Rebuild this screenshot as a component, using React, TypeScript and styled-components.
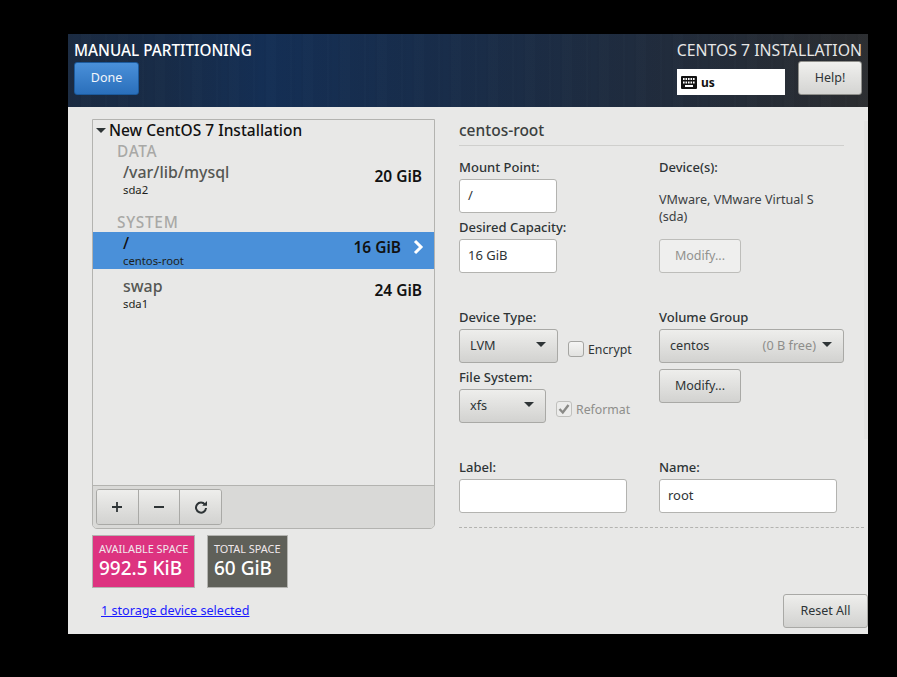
import React from "react";
import styled, { createGlobalStyle } from "styled-components";

const Global = createGlobalStyle`
  html, body { margin: 0; padding: 0; background: #000; height: 100%; }
  body { font-family: "Noto Sans", "Open Sans", sans-serif; font-size: 13px; color: #2e3436; }
`;

const Screen = styled.div`
  width: 897px;
  height: 677px;
  padding: 34px 0 0 68px;
  box-sizing: border-box;
  background: #000;
`;

const Window = styled.div`
  width: 800px;
  height: 600px;
  display: flex;
  flex-direction: column;
  background: #e8e8e7;
`;

const Header = styled.header`
  height: 73px;
  flex: none;
  box-sizing: border-box;
  padding: 7px 6px 0;
  display: flex;
  justify-content: space-between;
  background:
    repeating-linear-gradient(90deg, rgba(255,255,255,0.008) 0 2px, rgba(0,0,0,0.012) 2px 5px, rgba(255,255,255,0) 5px 11px, rgba(0,0,0,0.02) 11px 13px, rgba(255,255,255,0.008) 13px 23px, rgba(0,0,0,0.01) 23px 37px),
    linear-gradient(90deg, #1b2b42 0%, #182c48 12%, #142f55 25%, #182d4b 45%, #1f2c3f 70%, #2b2d30 100%);
`;

const HeaderGroup = styled.div<{ $end?: boolean }>`
  display: flex;
  flex-direction: column;
  align-items: ${(p) => (p.$end ? "flex-end" : "flex-start")};
`;

const Title = styled.div<{ $light?: boolean }>`
  height: 20px;
  line-height: 19px;
  font-size: ${(p) => (p.$light ? 15.8 : 15.3)}px;
  font-weight: ${(p) => (p.$light ? 400 : 500)};
  color: ${(p) => (p.$light ? "#e6e6e6" : "#ffffff")};
  white-space: nowrap;
`;

const DoneButton = styled.div`
  margin-top: 1px;
  width: 65px;
  height: 33px;
  box-sizing: border-box;
  border: 1px solid #1c5a9c;
  border-radius: 3px;
  background: linear-gradient(#4a90d9, #2a6fbb);
  color: #f2f6fb;
  font-size: 12.5px;
  padding-bottom: 3px;
  display: flex;
  align-items: center;
  justify-content: center;
`;

const HeaderTools = styled.div`
  display: flex;
  align-items: flex-end;
  gap: 13px;
`;

const KeyboardBox = styled.div`
  width: 108px;
  height: 26px;
  box-sizing: border-box;
  background: #fff;
  padding-left: 4px;
  display: flex;
  align-items: center;
  gap: 4px;
  color: #111;
  font-size: 12px;
  font-weight: 700;
`;

const HelpButton = styled.div`
  width: 64px;
  height: 34px;
  box-sizing: border-box;
  border: 1px solid #8f8f8b;
  border-radius: 3px;
  background: linear-gradient(#f0f0ee, #d4d4d2);
  color: #2e3436;
  font-size: 12.5px;
  padding-bottom: 2px;
  display: flex;
  align-items: center;
  justify-content: center;
`;

const Body = styled.main`
  flex: 1;
  min-height: 0;
  display: flex;
  padding: 12px 0 0 24px;
  gap: 24px;
`;

const LeftColumn = styled.section`
  width: 343px;
  flex: none;
  display: flex;
  flex-direction: column;
`;

const Panel = styled.div`
  height: 410px;
  box-sizing: border-box;
  border: 1px solid #b3b3b0;
  border-radius: 0 0 5px 5px;
  display: flex;
  flex-direction: column;
`;

const List = styled.div`
  flex: 1;
  min-height: 0;
`;

const InstallHeading = styled.div`
  height: 21px;
  line-height: 19px;
  display: flex;
  align-items: center;
  padding: 0 0 0 3px;
  box-sizing: border-box;
  gap: 3px;
  font-size: 15.5px;
  font-weight: 500;
  color: #111;
  white-space: nowrap;
`;

const GroupLabel = styled.div`
  height: 20px;
  line-height: 22px;
  padding-left: 24px;
  font-size: 15.4px;
  letter-spacing: 0.7px;
  font-weight: 500;
  color: #a8a8a6;
`;

const Group = styled.div`
  & + & { margin-top: 14px; }
`;

const Row = styled.div<{ $selected?: boolean }>`
  height: 37px;
  box-sizing: border-box;
  padding: 0 12px 0 30px;
  display: flex;
  align-items: center;
  justify-content: space-between;
  background: ${(p) => (p.$selected ? "#4a90d9" : "transparent")};
  & + & { margin-top: 6px; }
`;

const RowText = styled.div`
  display: flex;
  flex-direction: column;
`;

const RowName = styled.div<{ $selected?: boolean }>`
  height: 22px;
  line-height: 22px;
  font-size: 15.9px;
  font-weight: 500;
  color: ${(p) => (p.$selected ? "#111" : "#555753")};
`;

const RowSub = styled.div`
  height: 15px;
  line-height: 14px;
  font-size: 11.3px;
  color: #1d1f20;
`;

const RowEnd = styled.div<{ $shift?: boolean }>`
  display: flex;
  align-items: center;
  gap: 10px;
  margin-bottom: 7px;
  margin-right: ${(p) => (p.$shift ? -2 : 0)}px;
`;

const RowSize = styled.div`
  font-size: 15.5px;
  font-weight: 600;
  color: #111;
`;

const Toolbar = styled.div`
  height: 43px;
  flex: none;
  box-sizing: border-box;
  border-top: 1px solid #b3b3b0;
  border-radius: 0 0 4px 4px;
  background: #d9d9d7;
  padding: 3px;
`;

const ToolGroup = styled.div`
  display: flex;
  width: 126px;
  height: 36px;
  border: 1px solid #a9a9a6;
  border-radius: 3px;
  box-sizing: border-box;
  overflow: hidden;
`;

const ToolButton = styled.div`
  flex: 1;
  display: flex;
  align-items: center;
  justify-content: center;
  background: linear-gradient(#eeeeec, #d2d2d0);
  color: #2e3436;
  & + & { border-left: 1px solid #a9a9a6; }
`;

const Stats = styled.div`
  margin-top: 6px;
  display: flex;
  gap: 12px;
`;

const Stat = styled.div<{ $bg: string; $w: number }>`
  width: ${(p) => p.$w}px;
  height: 53px;
  box-sizing: border-box;
  border: 1px solid #b3b3b0;
  background: ${(p) => p.$bg};
  padding: 6px 6px 0;
  color: #fff;
`;

const StatLabel = styled.div`
  font-size: 10.9px;
  line-height: 14px;
  white-space: nowrap;
  color: #f1e8ec;
`;

const StatValue = styled.div`
  font-size: 19px;
  line-height: 22px;
  margin-top: 1px;
  font-weight: 500;
  white-space: nowrap;
`;

const DeviceLink = styled.a`
  margin: 14px 0 0 9px;
  font-size: 12.6px;
  line-height: 18px;
  color: #1a1aff;
  text-decoration: underline;
`;

const RightColumn = styled.section`
  flex: 1;
  min-width: 0;
  display: flex;
  flex-direction: column;
  position: relative;
  &::after {
    content: "";
    position: absolute;
    right: 0;
    top: 2px;
    width: 4px;
    height: 318px;
    background: #e3e3e2;
  }
`;

const SectionTitle = styled.div`
  width: 385px;
  height: 27px;
  line-height: 22px;
  box-sizing: border-box;
  border-bottom: 1px solid #cfcfcd;
  font-size: 15.5px;
  font-weight: 500;
  color: #3b3f40;
`;

const Form = styled.div`
  margin-top: 11px;
  display: grid;
  grid-template-columns: 200px 1fr;
  grid-template-rows: 56px 56px 26px 56px 56px 26px 56px;
  row-gap: 4px;
  height: 356px;
`;

const Field = styled.div<{ $span?: number }>`
  display: flex;
  flex-direction: column;
  grid-row: span ${(p) => p.$span ?? 1};
`;

const Spacer = styled.div`
  grid-column: span 2;
  height: 26px;
`;

const FieldLabel = styled.div`
  height: 20px;
  line-height: 20px;
  margin-bottom: 2px;
  font-size: 13px;
  font-weight: 500;
  color: #2e3436;
`;

const TextBox = styled.div<{ $w: number }>`
  width: ${(p) => p.$w}px;
  height: 34px;
  box-sizing: border-box;
  border: 1px solid #b3b3b0;
  border-radius: 3px;
  background: #fff;
  padding: 0 0 3px 8px;
  display: flex;
  align-items: center;
  font-size: 13px;
  color: #2e3436;
`;

const DeviceText = styled.div`
  margin-top: 12px;
  font-size: 12.6px;
  line-height: 17px;
  color: #3c4042;
`;

const ModifyButton = styled.div<{ $disabled?: boolean }>`
  width: 82px;
  height: 34px;
  box-sizing: border-box;
  border: 1px solid ${(p) => (p.$disabled ? "#bdbdba" : "#a9a9a6")};
  border-radius: 3px;
  background: ${(p) => (p.$disabled ? "#efefee" : "linear-gradient(#eeeeec, #d2d2d0)")};
  color: ${(p) => (p.$disabled ? "#92928f" : "#2e3436")};
  font-size: 12.5px;
  padding-bottom: 1px;
  display: flex;
  align-items: center;
  justify-content: center;
`;

const ModifyPush = styled(ModifyButton)<{ $top: number }>`
  margin-top: ${(p) => p.$top}px;
`;

const ControlRow = styled.div`
  display: flex;
  align-items: flex-start;
`;

const Select = styled.div<{ $w: number }>`
  width: ${(p) => p.$w}px;
  height: 34px;
  flex: none;
  box-sizing: border-box;
  border: 1px solid #a9a9a6;
  border-radius: 3px;
  background: linear-gradient(#eeeeec, #d2d2d0);
  padding: 0 11px 3px 10px;
  display: flex;
  align-items: center;
  justify-content: space-between;
  font-size: 12.7px;
  color: #2e3436;
`;

const SelectHint = styled.span`
  margin-left: auto;
  margin-right: 6px;
  color: #8e8e8b;
`;

const Caret = styled.span<{ $size?: number }>`
  width: 0;
  height: 0;
  border-left: ${(p) => p.$size ?? 5}px solid transparent;
  border-right: ${(p) => p.$size ?? 5}px solid transparent;
  border-top: ${(p) => p.$size ?? 5}px solid #2e3436;
  flex: none;
`;

const Check = styled.div<{ $ml: number; $muted?: boolean }>`
  margin: 12px 0 0 ${(p) => p.$ml}px;
  display: flex;
  align-items: flex-start;
  gap: 4px;
  font-size: 12.3px;
  line-height: 18px;
  color: ${(p) => (p.$muted ? "#8e8e8b" : "#2e3436")};
`;

const CheckBox = styled.span<{ $muted?: boolean }>`
  width: 16px;
  height: 16px;
  box-sizing: border-box;
  border: 1px solid ${(p) => (p.$muted ? "#c0c0bd" : "#a5a5a2")};
  border-radius: 3px;
  background: ${(p) => (p.$muted ? "#ececeb" : "linear-gradient(#f5f5f4, #e2e2e0)")};
  display: flex;
  align-items: center;
  justify-content: center;
`;

const Dashed = styled.div`
  margin-top: 14px;
  width: 405px;
  border-top: 1px dashed #b3b3b0;
`;

const ResetButton = styled.div`
  margin: auto 0 6px auto;
  width: 85px;
  height: 34px;
  box-sizing: border-box;
  border: 1px solid #a9a9a6;
  border-radius: 3px;
  background: linear-gradient(#eeeeec, #d2d2d0);
  color: #2e3436;
  font-size: 12.5px;
  padding-bottom: 1px;
  display: flex;
  align-items: center;
  justify-content: center;
`;

const KeyboardIcon = () => (
  <svg width="16" height="13" viewBox="0 0 16 13">
    <rect x="0" y="0" width="16" height="13" rx="1" fill="#111" />
    {[2, 4.5, 7, 9.5, 12].map((x) => (
      <rect key={"a" + x} x={x} y="2" width="1.6" height="2" fill="#fff" />
    ))}
    {[2, 4.5, 7, 9.5, 12].map((x) => (
      <rect key={"b" + x} x={x} y="5.5" width="1.6" height="2" fill="#fff" />
    ))}
    <rect x="4" y="9" width="8" height="2" fill="#fff" />
  </svg>
);

const Chevron = () => (
  <svg width="13" height="16" viewBox="0 0 13 16">
    <path d="M4 2 L10 8 L4 14" fill="none" stroke="#fff" strokeWidth="3" />
  </svg>
);

const PlusIcon = () => (
  <svg width="12" height="12" viewBox="0 0 12 12">
    <path d="M6 1v10M1 6h10" stroke="#2e3436" strokeWidth="1.8" />
  </svg>
);

const MinusIcon = () => (
  <svg width="12" height="12" viewBox="0 0 12 12">
    <path d="M1 6h10" stroke="#2e3436" strokeWidth="1.8" />
  </svg>
);

const ReloadIcon = () => (
  <svg width="14" height="14" viewBox="0 0 14 14">
    <path d="M11 4.6A5 5 0 1 0 12 8" fill="none" stroke="#2e3436" strokeWidth="2" />
    <path d="M8.2 5.8H13V1z" fill="#2e3436" />
  </svg>
);

const CheckMark = () => (
  <svg width="12" height="12" viewBox="0 0 12 12">
    <path d="M1.5 6 L4.8 9.5 L10.5 2" fill="none" stroke="#8a8a87" strokeWidth="2.4" />
  </svg>
);

export default function App() {
  return (
    <>
      <Global />
      <Screen>
        <Window>
          <Header>
            <HeaderGroup>
              <Title>MANUAL PARTITIONING</Title>
              <DoneButton>Done</DoneButton>
            </HeaderGroup>
            <HeaderGroup $end>
              <Title $light>CENTOS 7 INSTALLATION</Title>
              <HeaderTools>
                <KeyboardBox>
                  <KeyboardIcon />
                  us
                </KeyboardBox>
                <HelpButton>Help!</HelpButton>
              </HeaderTools>
            </HeaderGroup>
          </Header>
          <Body>
            <LeftColumn>
              <Panel>
                <List>
                  <InstallHeading>
                    <Caret />
                    New CentOS 7 Installation
                  </InstallHeading>
                  <Group>
                    <GroupLabel>DATA</GroupLabel>
                    <Row>
                      <RowText>
                        <RowName>/var/lib/mysql</RowName>
                        <RowSub>sda2</RowSub>
                      </RowText>
                      <RowEnd>
                        <RowSize>20 GiB</RowSize>
                      </RowEnd>
                    </Row>
                  </Group>
                  <Group>
                    <GroupLabel>SYSTEM</GroupLabel>
                    <Row $selected>
                      <RowText>
                        <RowName $selected>/</RowName>
                        <RowSub>centos-root</RowSub>
                      </RowText>
                      <RowEnd $shift>
                        <RowSize>16 GiB</RowSize>
                        <Chevron />
                      </RowEnd>
                    </Row>
                    <Row>
                      <RowText>
                        <RowName>swap</RowName>
                        <RowSub>sda1</RowSub>
                      </RowText>
                      <RowEnd>
                        <RowSize>24 GiB</RowSize>
                      </RowEnd>
                    </Row>
                  </Group>
                </List>
                <Toolbar>
                  <ToolGroup>
                    <ToolButton><PlusIcon /></ToolButton>
                    <ToolButton><MinusIcon /></ToolButton>
                    <ToolButton><ReloadIcon /></ToolButton>
                  </ToolGroup>
                </Toolbar>
              </Panel>
              <Stats>
                <Stat $bg="#dd3380" $w={103}>
                  <StatLabel>AVAILABLE SPACE</StatLabel>
                  <StatValue>992.5 KiB</StatValue>
                </Stat>
                <Stat $bg="#5f6059" $w={81}>
                  <StatLabel>TOTAL SPACE</StatLabel>
                  <StatValue>60 GiB</StatValue>
                </Stat>
              </Stats>
              <DeviceLink href="#">1 storage device selected</DeviceLink>
            </LeftColumn>
            <RightColumn>
              <SectionTitle>centos-root</SectionTitle>
              <Form>
                <Field>
                  <FieldLabel>Mount Point:</FieldLabel>
                  <TextBox $w={98}>/</TextBox>
                </Field>
                <Field $span={2}>
                  <FieldLabel>Device(s):</FieldLabel>
                  <DeviceText>VMware, VMware Virtual S<br />(sda)</DeviceText>
                  <ModifyPush $disabled $top={14}>Modify...</ModifyPush>
                </Field>
                <Field>
                  <FieldLabel>Desired Capacity:</FieldLabel>
                  <TextBox $w={98}>16 GiB</TextBox>
                </Field>
                <Spacer />
                <Field>
                  <FieldLabel>Device Type:</FieldLabel>
                  <ControlRow>
                    <Select $w={99}>LVM<Caret /></Select>
                    <Check $ml={10}><CheckBox />Encrypt</Check>
                  </ControlRow>
                </Field>
                <Field $span={2}>
                  <FieldLabel>Volume Group</FieldLabel>
                  <Select $w={185}>centos<SelectHint>(0 B free)</SelectHint><Caret /></Select>
                  <ModifyPush $top={6}>Modify...</ModifyPush>
                </Field>
                <Field>
                  <FieldLabel>File System:</FieldLabel>
                  <ControlRow>
                    <Select $w={87}>xfs<Caret /></Select>
                    <Check $ml={10} $muted><CheckBox $muted><CheckMark /></CheckBox>Reformat</Check>
                  </ControlRow>
                </Field>
                <Spacer />
                <Field>
                  <FieldLabel>Label:</FieldLabel>
                  <TextBox $w={168} />
                </Field>
                <Field>
                  <FieldLabel>Name:</FieldLabel>
                  <TextBox $w={178}>root</TextBox>
                </Field>
              </Form>
              <Dashed />
              <ResetButton>Reset All</ResetButton>
            </RightColumn>
          </Body>
        </Window>
      </Screen>
    </>
  );
}
